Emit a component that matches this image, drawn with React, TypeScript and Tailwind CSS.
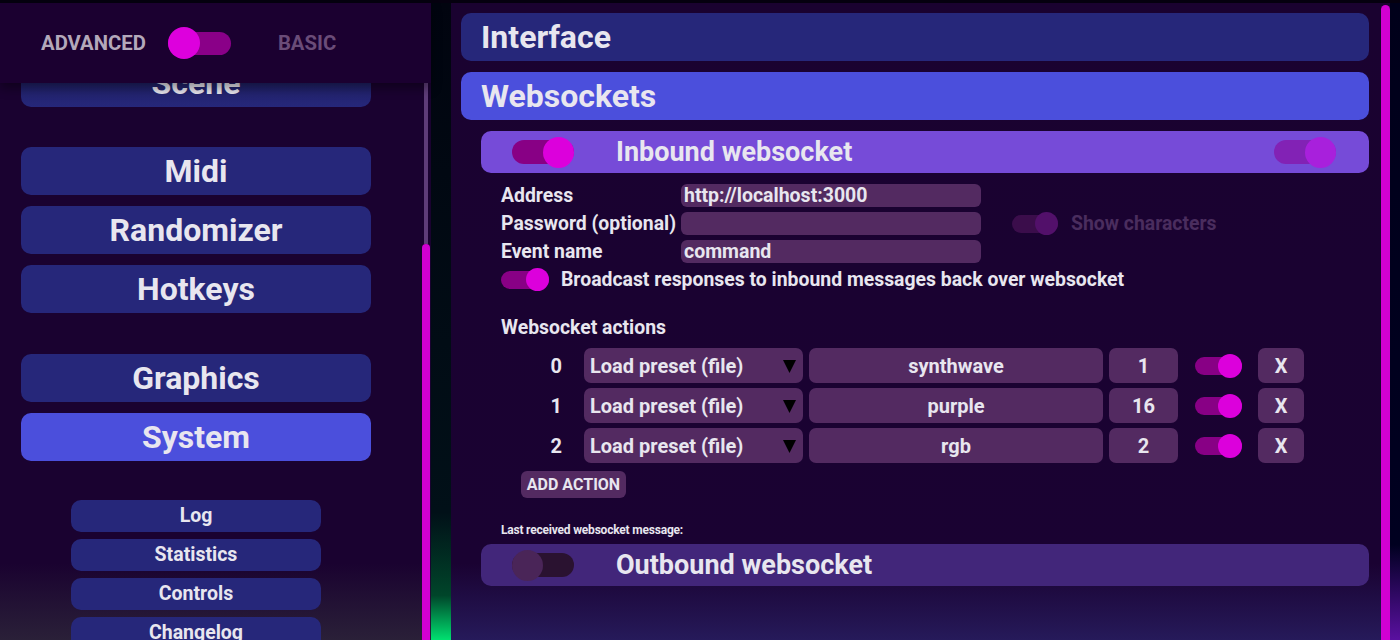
import React from 'react';

type ToggleProps = {
  on: boolean;
  w: number;
  knob: number;
  track: number;
  trackColor: string;
  knobColor: string;
};

// small switch: knob sits over a pill track
const Toggle = ({ on, w, knob, track, trackColor, knobColor }: ToggleProps) => (
  <div className="relative shrink-0 flex items-center" style={{ width: w, height: knob }}>
    <div className={`w-full rounded-full ${trackColor}`} style={{ height: track }} />
    <div
      className={`absolute top-0 rounded-full ${knobColor} ${on ? 'right-0' : 'left-0'}`}
      style={{ width: knob, height: knob }}
    />
  </div>
);

const NavButton = ({ label, active, className = '' }: { label: string; active?: boolean; className?: string }) => (
  <div
    className={`w-[350px] h-[48px] shrink-0 rounded-[10px] flex items-center justify-center text-[32px] font-bold text-[#e8e6ef] ${
      active ? 'bg-[#4b4fdc]' : 'bg-[#26277a]'
    } ${className}`}
  >
    {label}
  </div>
);

const SubButton = ({ label, className = '' }: { label: string; className?: string }) => (
  <div className={`w-[250px] h-[32px] shrink-0 rounded-[10px] bg-[#26277a] flex items-center justify-center text-[19.5px] font-bold text-[#e8e6ef] ${className}`}>
    {label}
  </div>
);

const FieldRow = ({ label, value, children }: { label: string; value: string; children?: React.ReactNode }) => (
  <div className="flex items-center h-[23px]">
    <div className="w-[180px] text-[19.4px] font-bold leading-none">{label}</div>
    <div className="w-[300px] h-[23px] rounded-[6px] bg-[#532a61] flex items-center px-[3px] text-[19.5px] font-bold leading-none">
      {value}
    </div>
    {children}
  </div>
);

const actions = [
  { idx: 0, value: 'synthwave', count: '1' },
  { idx: 1, value: 'purple', count: '16' },
  { idx: 2, value: 'rgb', count: '2' },
];

const ActionRow = ({ idx, value, count }: { idx: number; value: string; count: string }) => (
  <div className="flex items-center h-[35px] text-[20px] font-bold">
    <div className="w-[63px] text-right pr-[22px]">{idx}</div>
    <div className="w-[219px] h-[35px] rounded-[7px] bg-[#532a61] flex items-center justify-between pl-[6px] pr-[7px]">
      <span>Load preset (file)</span>
      <svg width="13" height="13" viewBox="0 0 13 13" className="mt-[1px]">
        <polygon points="0,0 13,0 6.5,13" fill="#000" />
      </svg>
    </div>
    <div className="ml-[6px] w-[294px] h-[35px] rounded-[7px] bg-[#532a61] flex items-center justify-center">{value}</div>
    <div className="ml-[6px] w-[69px] h-[35px] rounded-[7px] bg-[#532a61] flex items-center justify-center">{count}</div>
    <div className="ml-[17px]">
      <Toggle on w={47} knob={24} track={18} trackColor="bg-[#880085]" knobColor="bg-[#dc00dc]" />
    </div>
    <div className="ml-[16px] w-[46px] h-[35px] rounded-[7px] bg-[#532a61] flex items-center justify-center">X</div>
  </div>
);

export default function App() {
  return (
    <div className="w-[1400px] h-[640px] overflow-hidden flex flex-col bg-[#05000f] font-['Roboto',sans-serif] text-[#e8e6ef]">
      <div className="h-[3px] shrink-0" />
      <div className="flex flex-1 min-h-0">
        {/* Left menu */}
        <div className="w-[431px] shrink-0 flex flex-col bg-[linear-gradient(to_bottom,#1a0230_0%,#1a0230_88%,#2a2038_100%)]">
          <div className="relative z-10 h-[80px] shrink-0 bg-[#1b0030] shadow-[0_5px_10px_rgba(0,0,0,0.4)] flex items-center">
            <span className="ml-[41px] text-[20.3px] font-bold text-[#b3a8ba]">ADVANCED</span>
            <div className="ml-[22px]">
              <Toggle on={false} w={63} knob={32} track={23} trackColor="bg-[#8a0088]" knobColor="bg-[#dd00dd]" />
            </div>
            <span className="ml-[47px] text-[20.3px] font-bold text-[#6a4c78]">BASIC</span>
          </div>
          <div className="flex flex-1 min-h-0">
            <div className="flex-1 overflow-hidden flex flex-col pl-[21px]">
              <NavButton label="Scene" className="-mt-[24px] text-[#8e8a98] bg-[linear-gradient(to_bottom,#1a1a55,#26277a)]" />
              <NavButton label="Midi" className="mt-[40px]" />
              <NavButton label="Randomizer" className="mt-[11px]" />
              <NavButton label="Hotkeys" className="mt-[11px]" />
              <NavButton label="Graphics" className="mt-[41px]" />
              <NavButton label="System" active className="mt-[11px]" />
              <div className="flex flex-col items-center w-[350px] mt-[39px] gap-[7px]">
                <SubButton label="Log" />
                <SubButton label="Statistics" />
                <SubButton label="Controls" />
                <SubButton label="Changelog" />
              </div>
            </div>
            <div className="w-[8px] mr-[1px] flex flex-col items-center">
              <div className="w-[4px] h-[161px] bg-[#5e3c78]" />
              <div className="w-[8px] flex-1 rounded-t-full bg-[#d200d2]" />
            </div>
          </div>
        </div>

        {/* Divider */}
        <div className="w-[20px] shrink-0 bg-[linear-gradient(to_bottom,#01040f_0%,#011018_80%,#00452a_93%,#00e070_100%)]" />

        {/* Settings */}
        <div className="flex-1 flex bg-[linear-gradient(to_bottom,#1a0230_0%,#1a0232_88%,#261a5a_100%)]">
          <div className="flex-1 flex flex-col pl-[10px] pt-[10px] pr-[12px] overflow-hidden">
            <div className="h-[48px] rounded-[10px] bg-[#26277a] flex items-center pl-[20px] text-[32px] font-bold">Interface</div>
            <div className="mt-[11px] h-[48px] rounded-[10px] bg-[#4b4fdc] flex items-center pl-[20px] text-[32px] font-bold">Websockets</div>

            <div className="pl-[20px]">
              <div className="mt-[11px] h-[42px] rounded-[10px] bg-[#764bd8] flex items-center pl-[31px] pr-[33px]">
                <Toggle on w={62} knob={31} track={24} trackColor="bg-[#880085]" knobColor="bg-[#dc00dc]" />
                <span className="ml-[42px] text-[27px] font-bold">Inbound websocket</span>
                <div className="ml-auto">
                  <Toggle on w={62} knob={31} track={24} trackColor="bg-[#8222b5]" knobColor="bg-[#a820dc]" />
                </div>
              </div>

              <div className="pl-[20px] pt-[11px] flex flex-col gap-[5px]">
                <FieldRow label="Address" value="http://localhost:3000" />
                <FieldRow label="Password (optional)" value="">
                  <div className="ml-[31px]">
                    <Toggle on w={46} knob={23} track={18} trackColor="bg-[#3b0d4b]" knobColor="bg-[#52106a]" />
                  </div>
                  <span className="ml-[13px] text-[19.4px] font-bold text-[#4a2d5e]">Show characters</span>
                </FieldRow>
                <FieldRow label="Event name" value="command" />
                <div className="flex items-center h-[23px]">
                  <Toggle on w={48} knob={23} track={18} trackColor="bg-[#880085]" knobColor="bg-[#dc00dc]" />
                  <span className="ml-[12px] text-[19.4px] font-bold">Broadcast responses to inbound messages back over websocket</span>
                </div>
              </div>

              <div className="pl-[20px] mt-[26px] h-[22px] flex items-center text-[19.4px] font-bold">Websocket actions</div>

              <div className="pl-[40px] mt-[9px] flex flex-col gap-[5px]">
                {actions.map((a) => (
                  <ActionRow key={a.idx} {...a} />
                ))}
                <div className="mt-[3px] w-[105px] h-[27px] rounded-[6px] bg-[#532a61] flex items-center justify-center text-[16px] font-bold">
                  ADD ACTION
                </div>
              </div>

              <div className="pl-[20px] mt-[25px] text-[12px] font-bold leading-[14px] tracking-[-0.2px]">Last received websocket message:</div>

              <div className="mt-[7px] h-[42px] rounded-[10px] bg-[#42267a] flex items-center pl-[31px]">
                <Toggle on={false} w={62} knob={31} track={24} trackColor="bg-[#2a1230]" knobColor="bg-[#4a2558]" />
                <span className="ml-[42px] text-[27px] font-bold">Outbound websocket</span>
              </div>
            </div>
          </div>
          <div className="w-[9px] pt-[2px] flex flex-col">
            <div className="flex-1 rounded-t-full bg-[#d200d2]" />
          </div>
        </div>
        <div className="w-[10px] shrink-0 bg-[linear-gradient(to_bottom,#00001a_0%,#000020_85%,#5a10a0_100%)]" />
      </div>
    </div>
  );
}
